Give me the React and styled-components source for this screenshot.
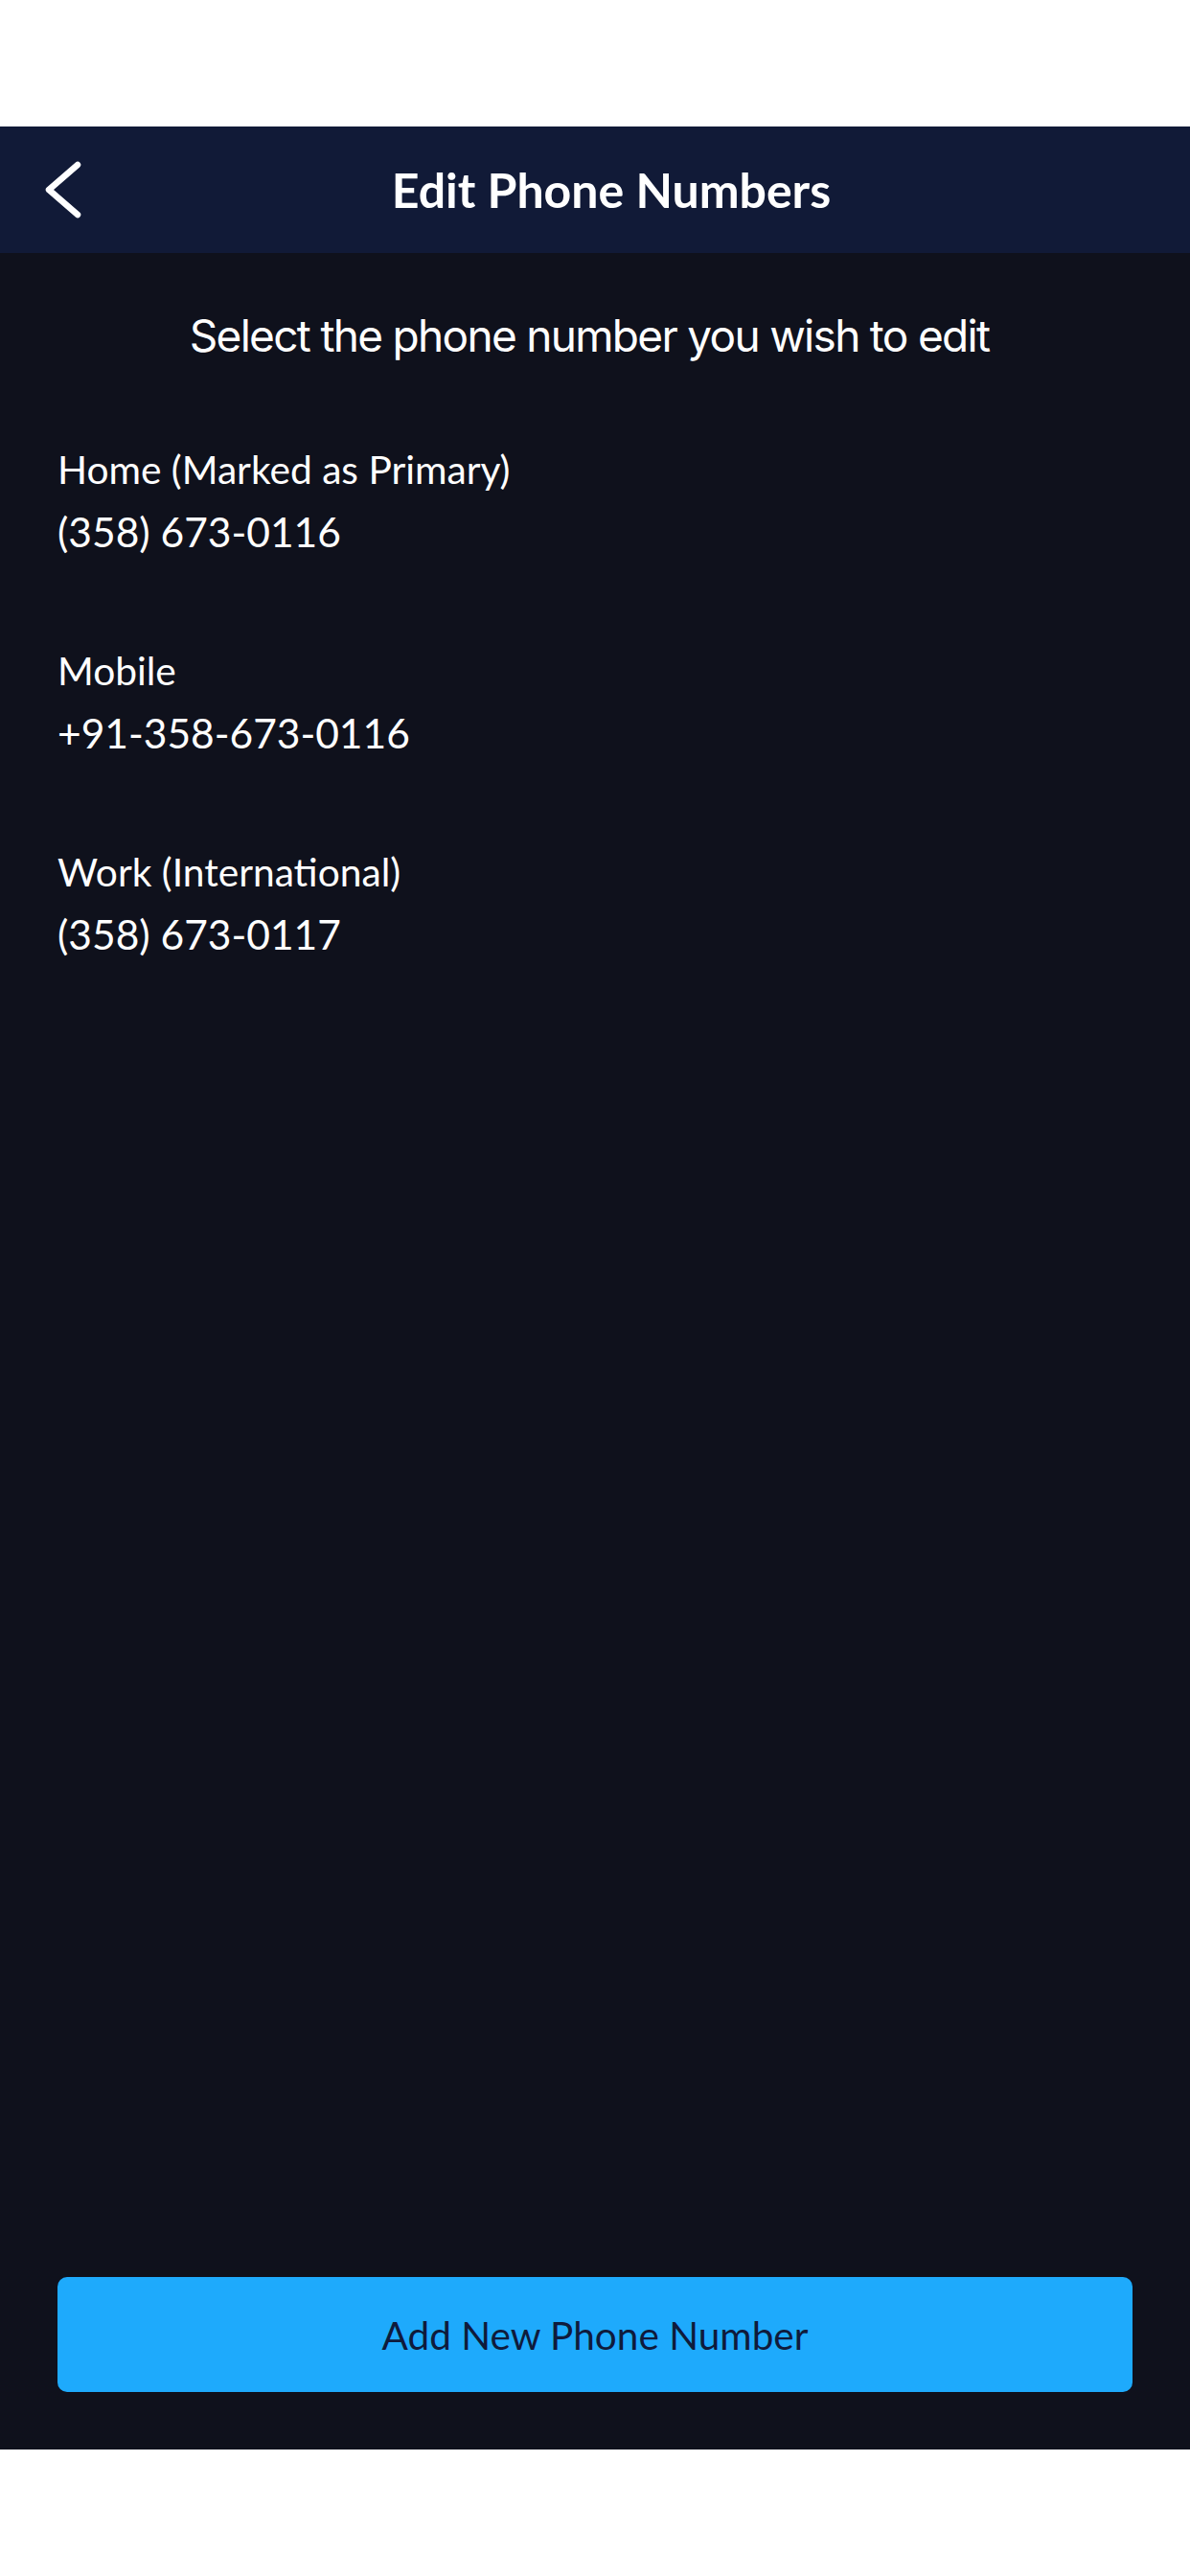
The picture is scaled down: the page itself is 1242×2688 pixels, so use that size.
import React from "react";
import styled, { createGlobalStyle } from "styled-components";

const SCREEN_DARK = "#0f111c";
const HEADER_NAVY = "#111a37";
const ACCENT_BLUE = "#1eaafc";
const TEXT_WHITE = "#ffffff";
const BUTTON_TEXT = "#0f1b3c";

const GlobalStyle = createGlobalStyle`
  html, body {
    margin: 0;
    padding: 0;
    background: #ffffff;
  }
  * {
    box-sizing: border-box;
  }
`;

const Page = styled.div`
  padding: 132px 0;
  background: #ffffff;
`;

const Screen = styled.div`
  display: flex;
  flex-direction: column;
  min-height: 2424px;
  background-color: ${SCREEN_DARK};
  font-family: "Lato", "Noto Sans", sans-serif;
  color: ${TEXT_WHITE};
`;

const Header = styled.header`
  display: flex;
  align-items: center;
  height: 132px;
  padding: 0 0 0 46px;
  background-color: ${HEADER_NAVY};
`;

const BackButton = styled.button.attrs(() => ({
  type: "button",
}))`
  display: flex;
  align-items: center;
  justify-content: center;
  width: 40px;
  height: 64px;
  padding: 0;
  border: none;
  background: transparent;
  color: ${TEXT_WHITE};
  cursor: pointer;
`;

const Title = styled.h1`
  flex: 1;
  margin: 0;
  padding-right: 52px;
  font-size: 50px;
  font-weight: 700;
  line-height: 56px;
  text-align: center;
  color: ${TEXT_WHITE};
`;

const Content = styled.main`
  display: flex;
  flex-direction: column;
  flex: 1;
  padding: 58px 60px 60px;
`;

const Subtitle = styled.p`
  margin: 0 0 87px;
  padding-right: 12px;
  font-family: "Inter", "Liberation Sans", sans-serif;
  font-size: 46px;
  line-height: 56px;
  letter-spacing: -1.7px;
  text-align: center;
  color: ${TEXT_WHITE};
`;

const PhoneList = styled.ul`
  display: flex;
  flex-direction: column;
  gap: 92px;
  margin: 0;
  padding: 0;
  list-style: none;
`;

const PhoneItem = styled.li`
  display: flex;
  flex-direction: column;
  gap: 12px;
  cursor: pointer;
`;

const PhoneLabel = styled.span`
  font-size: 40.7px;
  line-height: 50px;
  color: ${TEXT_WHITE};
`;

const PhoneNumber = styled.span`
  font-size: 42.5px;
  line-height: 56px;
  color: ${TEXT_WHITE};
`;

const Footer = styled.div`
  margin-top: auto;
`;

const PrimaryButton = styled.button.attrs(() => ({
  type: "button",
}))`
  width: 100%;
  height: 120px;
  border: none;
  border-radius: 10px;
  background-color: ${ACCENT_BLUE};
  font-family: "Lato", "Noto Sans", sans-serif;
  font-size: 40.5px;
  color: ${BUTTON_TEXT};
  cursor: pointer;
`;

const phones = [
  { label: "Home (Marked as Primary)", number: "(358) 673-0116" },
  { label: "Mobile", number: "+91-358-673-0116" },
  { label: "Work (International)", number: "(358) 673-0117" },
];

const ChevronLeft = () => (
  <svg width="40" height="62" viewBox="0 0 40 62" fill="none">
    <polyline
      points="35,5 5,31 35,57"
      stroke="currentColor"
      strokeWidth="6.5"
      strokeLinecap="round"
      strokeLinejoin="round"
    />
  </svg>
);

const App = () => {
  return (
    <Page>
      <GlobalStyle />
      <Screen>
        <Header>
          <BackButton aria-label="Back">
            <ChevronLeft />
          </BackButton>
          <Title>Edit Phone Numbers</Title>
        </Header>
        <Content>
          <Subtitle>Select the phone number you wish to edit</Subtitle>
          <PhoneList>
            {phones.map((phone) => (
              <PhoneItem key={phone.number + phone.label}>
                <PhoneLabel>{phone.label}</PhoneLabel>
                <PhoneNumber>{phone.number}</PhoneNumber>
              </PhoneItem>
            ))}
          </PhoneList>
          <Footer>
            <PrimaryButton>Add New Phone Number</PrimaryButton>
          </Footer>
        </Content>
      </Screen>
    </Page>
  );
};

export default App;
